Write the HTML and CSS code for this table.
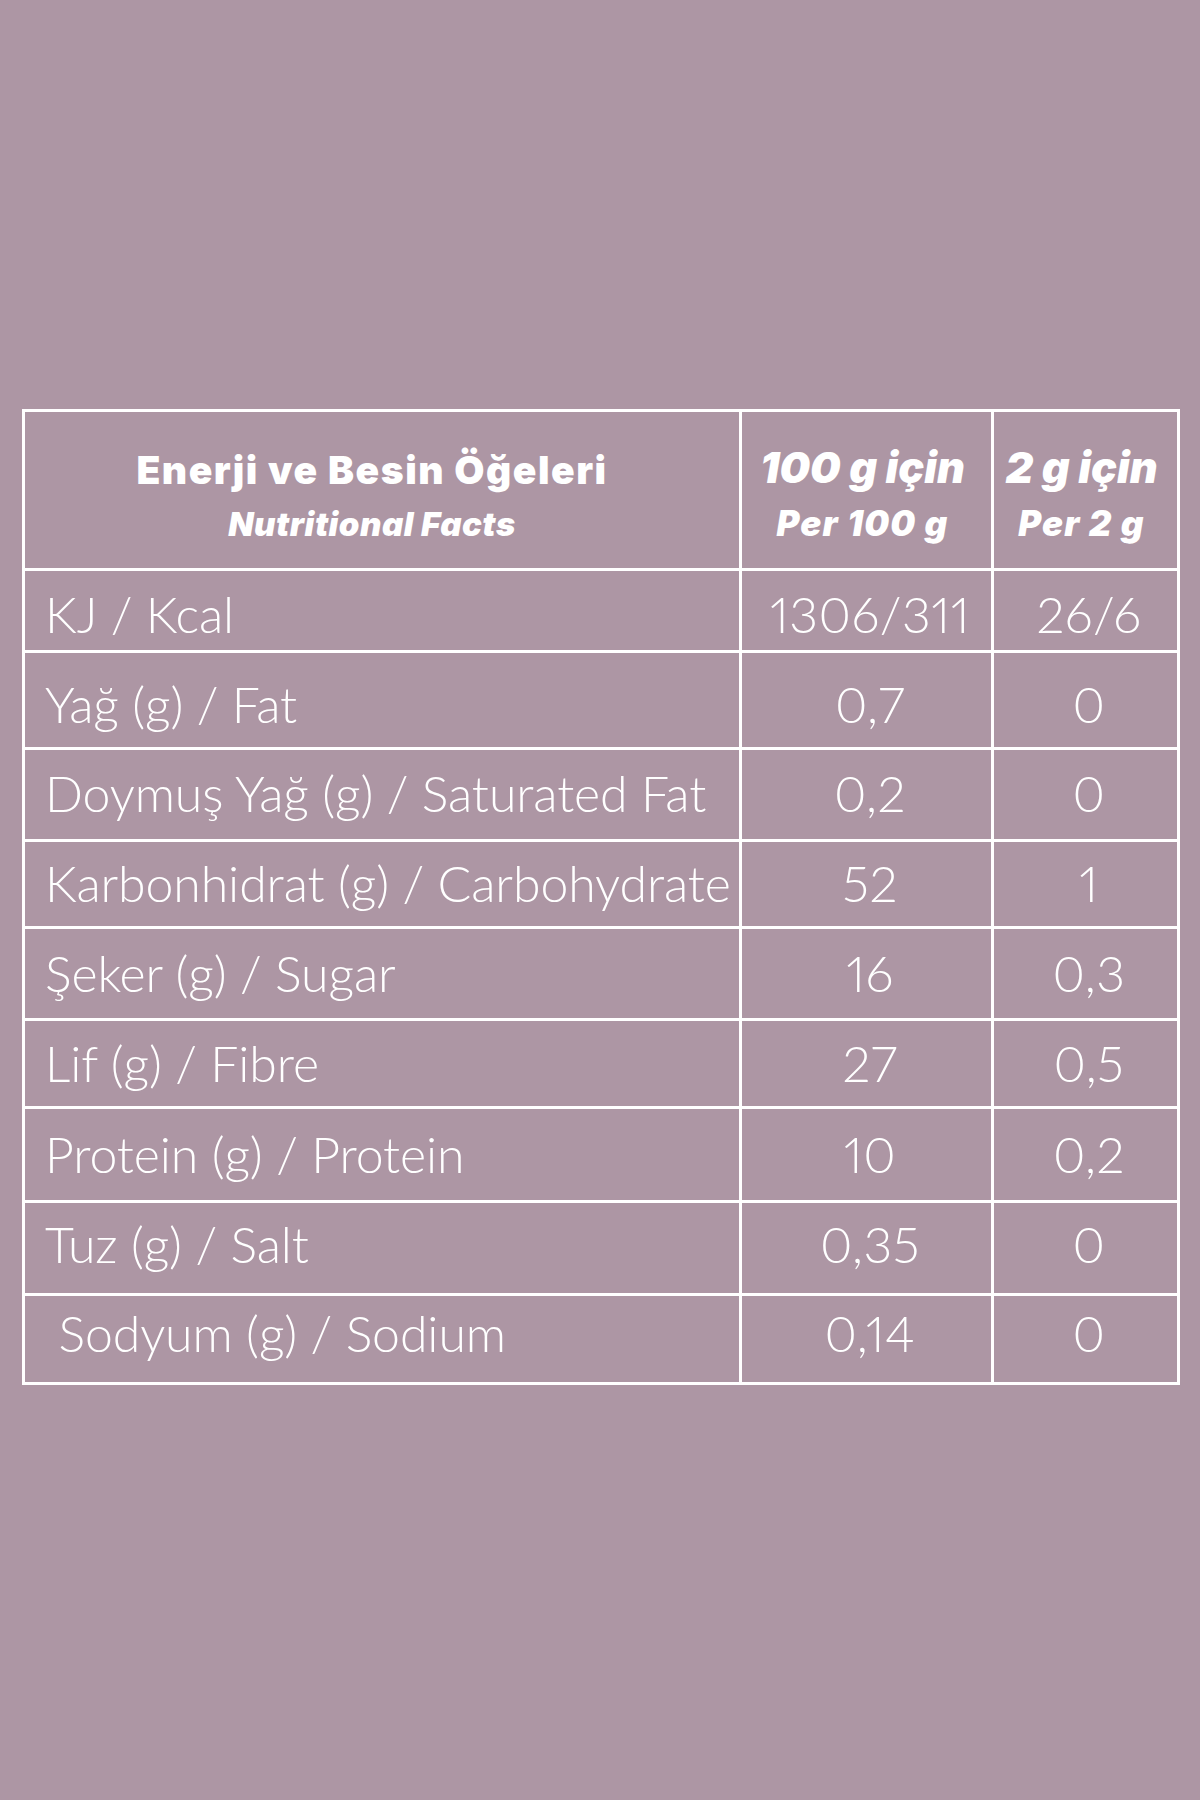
FILE: index.html
```html
<!DOCTYPE html>
<html lang="tr">
<head>
<meta charset="utf-8">
<title>Nutritional Facts</title>
<link rel="stylesheet" href="styles.css">
</head>
<body>
<div class="page">
  <table class="nt">
    <colgroup>
      <col class="c1">
      <col class="c2">
      <col class="c3">
    </colgroup>
    <thead>
      <tr class="r0">
        <th class="h-main"><span class="h1">Enerji ve Besin Öğeleri</span><span class="h2">Nutritional Facts</span></th>
        <th class="h-num"><span class="n1">100 g için</span><span class="n2">Per 100 g</span></th>
        <th class="h-num"><span class="n1">2 g için</span><span class="n2">Per 2 g</span></th>
      </tr>
    </thead>
    <tbody>
      <tr class="r1"><td class="lab">KJ / Kcal</td><td class="val">1306/311</td><td class="val">26/6</td></tr>
      <tr class="r2"><td class="lab">Yağ (g) / Fat</td><td class="val">0,7</td><td class="val">0</td></tr>
      <tr class="r3"><td class="lab">Doymuş Yağ (g) / Saturated Fat</td><td class="val">0,2</td><td class="val">0</td></tr>
      <tr class="r4"><td class="lab">Karbonhidrat (g) / Carbohydrate</td><td class="val">52</td><td class="val">1</td></tr>
      <tr class="r5"><td class="lab">Şeker (g) / Sugar</td><td class="val">16</td><td class="val">0,3</td></tr>
      <tr class="r6"><td class="lab">Lif (g) / Fibre</td><td class="val">27</td><td class="val">0,5</td></tr>
      <tr class="r7"><td class="lab">Protein (g) / Protein</td><td class="val">10</td><td class="val">0,2</td></tr>
      <tr class="r8"><td class="lab">Tuz (g) / Salt</td><td class="val">0,35</td><td class="val">0</td></tr>
      <tr class="r9"><td class="lab">&nbsp;Sodyum (g) / Sodium</td><td class="val">0,14</td><td class="val">0</td></tr>
    </tbody>
  </table>
</div>
</body>
</html>
```

FILE: styles.css
```css
html, body {
  margin: 0;
  padding: 0;
  background: #ad96a4;
}

body {
  width: 1200px;
  height: 1800px;
  font-family: "Lato", "Liberation Sans", sans-serif;
  color: #ffffff;
}

.page {
  padding: 409px 0 0 22px;
}

.nt {
  border-collapse: collapse;
  table-layout: fixed;
  width: 1155px;
}

.c1 { width: 717px; }
.c2 { width: 252px; }
.c3 { width: 186px; }

.nt th,
.nt td {
  border: 3px solid #ffffff;
  padding: 0;
}

.r0 { height: 159px; }
.r1 { height: 82px; }
.r2 { height: 97px; }
.r3 { height: 92px; }
.r4 { height: 87px; }
.r5 { height: 92px; }
.r6 { height: 88px; }
.r7 { height: 94px; }
.r8 { height: 93px; }
.r9 { height: 89px; }

.nt th {
  text-align: center;
  vertical-align: middle;
  font-family: "Inter", "DejaVu Sans", sans-serif;
  font-weight: 900;
}

.nt .h-main {
  padding-top: 10px;
  padding-right: 20px;
}

.nt .h-num {
  padding-top: 4px;
  padding-right: 8px;
}

.h1,
.h2,
.n1,
.n2 {
  display: block;
  white-space: nowrap;
}

.h1 {
  font-size: 39px;
  line-height: 52px;
  letter-spacing: 1.5px;
}

.h2 {
  margin-top: 6px;
  font-size: 33px;
  line-height: 44px;
  font-style: italic;
  letter-spacing: 0.5px;
}

.n1 {
  font-size: 43px;
  line-height: 54px;
  font-style: italic;
  letter-spacing: 0;
}

.n2 {
  margin-top: 8px;
  font-size: 35px;
  line-height: 42px;
  font-style: italic;
  letter-spacing: 1.2px;
}

.nt td {
  font-size: 50px;
  font-weight: 300;
  line-height: 60px;
  white-space: nowrap;
  vertical-align: middle;
}

.nt .r1 td { padding-top: 6px; }
.nt .r2 td { padding-top: 8px; }
.nt .r3 td { padding-bottom: 4px; }
.nt .r4 td { padding-bottom: 3px; }
.nt .r5 td { padding-bottom: 1px; }
.nt .r6 td { padding-bottom: 1px; }
.nt .r7 td { padding-bottom: 1px; }
.nt .r8 td { padding-bottom: 8px; }
.nt .r9 td { padding-bottom: 12px; }

.nt .lab {
  text-align: left;
  padding-left: 20px;
  letter-spacing: -0.1px;
}

.nt .val {
  text-align: center;
  padding-left: 7px;
  font-variant-numeric: proportional-nums;
  letter-spacing: 0.5px;
}
```
